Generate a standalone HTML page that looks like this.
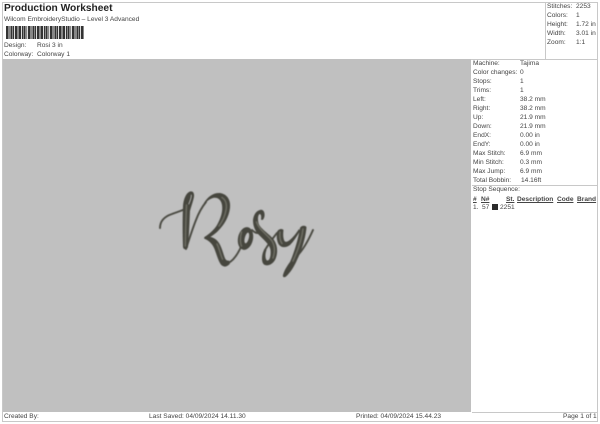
<!DOCTYPE html>
<html>
<head>
<meta charset="utf-8">
<style>
html,body{margin:0;padding:0;background:#fff;}
body{width:600px;height:424px;position:relative;overflow:hidden;font-family:"Liberation Sans",sans-serif;color:#444;font-size:6.6px;line-height:9px;}
.t{position:absolute;white-space:nowrap;filter:blur(.25px);}
.l{position:absolute;background:#c8c8c8;}
u{text-decoration:underline;}
</style>
</head>
<body>
<div class="l" style="left:2px;top:2px;width:595px;height:1px"></div>
<div class="l" style="left:2px;top:421px;width:595px;height:1px"></div>
<div class="l" style="left:597px;top:2px;width:1px;height:420px"></div>
<div class="l" style="left:2px;top:2px;width:1px;height:420px"></div>
<div class="l" style="left:545px;top:2px;width:1px;height:57px"></div>
<div class="l" style="left:471px;top:59px;width:127px;height:1px"></div>
<div class="l" style="left:472px;top:185px;width:126px;height:1px"></div>
<div class="l" style="left:472px;top:412px;width:126px;height:1px"></div>
<div style="position:absolute;left:3px;top:59px;width:468px;height:353px;background:#c0c0c0"></div>

<div class="t" style="left:4px;top:2px;font-size:10.2px;line-height:13px;font-weight:bold;color:#222">Production Worksheet</div>
<div class="t" style="left:4px;top:15px">Wilcom EmbroideryStudio – Level 3 Advanced</div>
<div style="position:absolute;left:6px;top:26px;width:78px;height:13px;background:repeating-linear-gradient(90deg,#333 0,#333 2px,#ddd 2px,#ddd 2.7px,#333 2.7px,#333 3.6px,#ddd 3.6px,#ddd 4.4px)"></div>
<div class="t" style="left:4px;top:41px">Design:</div>
<div class="t" style="left:37px;top:41px">Rosi 3 in</div>
<div class="t" style="left:4px;top:50px">Colorway:</div>
<div class="t" style="left:37px;top:50px">Colorway 1</div>

<div class="t" style="left:547px;top:2px">Stitches:</div><div class="t" style="left:576px;top:2px">2253</div>
<div class="t" style="left:547px;top:11px">Colors:</div><div class="t" style="left:576px;top:11px">1</div>
<div class="t" style="left:547px;top:20px">Height:</div><div class="t" style="left:576px;top:20px">1.72 in</div>
<div class="t" style="left:547px;top:29px">Width:</div><div class="t" style="left:576px;top:29px">3.01 in</div>
<div class="t" style="left:547px;top:38px">Zoom:</div><div class="t" style="left:576px;top:38px">1:1</div>

<div class="t" style="left:473px;top:59px">Machine:</div><div class="t" style="left:520px;top:59px">Tajima</div>
<div class="t" style="left:473px;top:68px">Color changes:</div><div class="t" style="left:520px;top:68px">0</div>
<div class="t" style="left:473px;top:77px">Stops:</div><div class="t" style="left:520px;top:77px">1</div>
<div class="t" style="left:473px;top:86px">Trims:</div><div class="t" style="left:520px;top:86px">1</div>
<div class="t" style="left:473px;top:95px">Left:</div><div class="t" style="left:520px;top:95px">38.2 mm</div>
<div class="t" style="left:473px;top:104px">Right:</div><div class="t" style="left:520px;top:104px">38.2 mm</div>
<div class="t" style="left:473px;top:113px">Up:</div><div class="t" style="left:520px;top:113px">21.9 mm</div>
<div class="t" style="left:473px;top:122px">Down:</div><div class="t" style="left:520px;top:122px">21.9 mm</div>
<div class="t" style="left:473px;top:131px">EndX:</div><div class="t" style="left:520px;top:131px">0.00 in</div>
<div class="t" style="left:473px;top:140px">EndY:</div><div class="t" style="left:520px;top:140px">0.00 in</div>
<div class="t" style="left:473px;top:149px">Max Stitch:</div><div class="t" style="left:520px;top:149px">6.9 mm</div>
<div class="t" style="left:473px;top:158px">Min Stitch:</div><div class="t" style="left:520px;top:158px">0.3 mm</div>
<div class="t" style="left:473px;top:167px">Max Jump:</div><div class="t" style="left:520px;top:167px">6.9 mm</div>
<div class="t" style="left:473px;top:176px">Total Bobbin:</div><div class="t" style="left:521px;top:176px">14.16ft</div>
<div class="t" style="left:473px;top:185px">Stop Sequence:</div>
<div class="t" style="left:473px;top:195px;font-weight:bold"><u>#</u></div>
<div class="t" style="left:481px;top:195px;font-weight:bold"><u>N#</u></div>
<div class="t" style="left:506px;top:195px;font-weight:bold"><u>St.</u></div>
<div class="t" style="left:517px;top:195px;font-weight:bold"><u>Description</u></div>
<div class="t" style="left:557px;top:195px;font-weight:bold"><u>Code</u></div>
<div class="t" style="left:577px;top:195px;font-weight:bold"><u>Brand</u></div>
<div class="t" style="left:473px;top:203px">1.</div>
<div class="t" style="left:482px;top:203px">57</div>
<div style="position:absolute;left:492px;top:204px;width:6px;height:6px;background:#2c2c2c"></div>
<div class="t" style="left:500px;top:203px">2251</div>

<div class="t" style="left:4px;top:412px">Created By:</div>
<div class="t" style="left:149px;top:412px">Last Saved: 04/09/2024 14.11.30</div>
<div class="t" style="left:356px;top:412px">Printed: 04/09/2024 15.44.23</div>
<div class="t" style="left:563px;top:412px">Page 1 of 1</div>

<svg style="position:absolute;left:0;top:0;filter:blur(.4px)" width="600" height="424" viewBox="0 0 600 424" fill="none" stroke-linecap="round" stroke-linejoin="round">
<g stroke="#4a4a42" stroke-width="1.9">
<path d="M160 228C160 220 166 216 172 214C177 212 181 211 185 209"/>
<path d="M186 249C189 240 192 230 196 220C199 212 202 207 206 202"/>
<path d="M228 263C233 261 237 255 240 249C241 246 242 244 243 241"/>
<path d="M252 230C255 233 258 234 261 232"/>
<path d="M265 250C268 245 273 238 277 233"/>
<path d="M284.500 275C286 268 292 261 297 256C303 250 309 239 313 230"/>
</g>
<g fill="#46463e">
<path d="M190 191.500C193.500 190.500 195 194 193.500 199C192.500 203 191 207 190 211C189.500 222 189 236 188 247C187 250 183.500 250 183 247C182.500 234 182.500 218 183 206C183.500 199 186 193 190 191.500Z"/>
<path d="M204 203C208 196 214 192.500 220 193C227 194 231 200 230 208C229 217 224 225 218 231C214 235 209 238 206 239L204 237.500C209 234 214 230 217 225C221 218 223 211 222 205C221 199 217 197 213 198C209 199 206 202 204 205Z"/>
<path d="M205 236.500C211 236 216 238.500 219 243C222 248 223 253 224.500 257C225.500 260 227 261 229 260.500L230 263.500C227 267.500 223 267.500 220.500 264C218 260 216.500 254 214.500 249C212.500 244 209 240.500 204 238.500Z"/>
<ellipse cx="245.500" cy="238.500" rx="7.500" ry="11.500" transform="rotate(12 245.500 238.500)"/>
<path d="M260 210C263 209 265 212 264.500 216C264 219 262.500 221 261 219.500C261.500 216 261 214 259.500 214C258 215 257.500 219 258.500 223C260 229 270 234 274 240C278 246 278 254 275 260C272 265 267 266.500 264 264.500C261 262 261.500 254 264.500 249L266.500 250C265 254 265 259 267 260.500C270 261 271 255 270.500 250C270 245 264 240 259 235C255 231 253 226 253 220C253.500 215 256 211 260 210Z"/>
<path d="M277 232C278 229 282 228 283.500 230C283 234 283 238 284.500 241C286 243 289 241 292 238C295 235 297 232 299 229L300 231C297 236 294 241 290 245C286 248 281 248 278.500 244C276.500 240 276.500 236 277 232Z"/>
<path d="M300 228C301 225.500 305 225 306.500 227C306 236 302 250 297 260C294 267 290 273 286 276.500C284 278 282.500 277 283 275C284 271 287 266 290 262C294 253 298 240 300 228Z"/>
</g>
<ellipse cx="246.800" cy="238" rx="2" ry="5.500" transform="rotate(15 246.800 238)" fill="#c0c0c0"/>
<path d="M191.300 195C191.500 198 190 201 188.800 204" stroke="#c0c0c0" stroke-width=".8"/>
<g stroke="#6c6c62" stroke-width="1.600">
<path d="M186.500 205C185.800 220 185.500 235 185.300 246"/>
<path d="M222 197.500C226 200 227 205 226 210C225 216 222 222 219 226"/>
<path d="M217 244C219.500 249 220.500 255 222.500 259"/>
<path d="M256.500 222C259 230 268 235 272 241C275 246 275 252 273 258"/>
<path d="M303 229C302 238 298 250 293 261"/>
<path d="M241.500 232C240 237 240 243 241.500 246"/>
<path d="M280 232C279.500 237 280 241 282 243.500"/>
</g>
</svg>
</body>
</html>
